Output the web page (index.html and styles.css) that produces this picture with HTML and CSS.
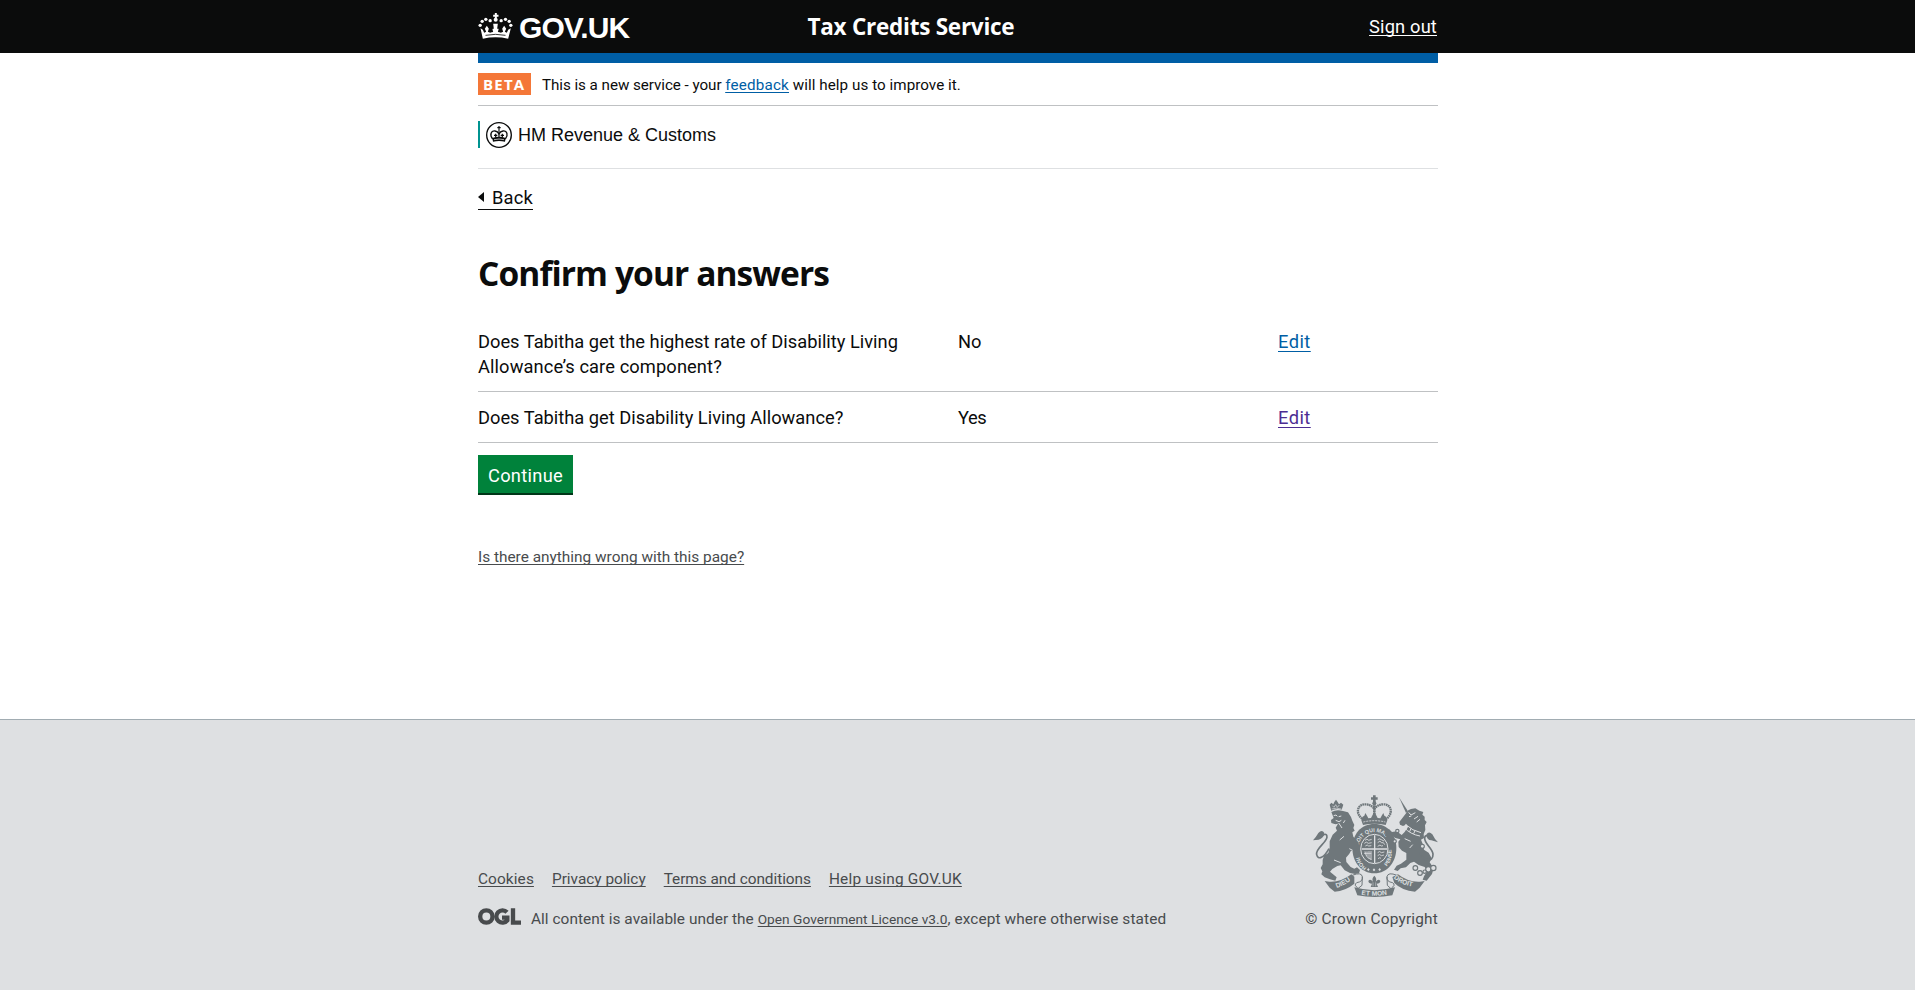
FILE: index.html
```
<!DOCTYPE html>
<html lang="en">
<head>
<meta charset="utf-8">
<title>Confirm your answers - Tax Credits Service - GOV.UK</title>
<link rel="stylesheet" href="styles.css">
</head>
<body>
<header class="header">
  <div class="wrap header-inner">
    <a class="logo" href="#">
      <svg class="logo-crown" viewBox="24 38 104 78" fill="#fff">
        <path d="M74 38h6v5h5v6h-5v5h-6v-5h-5v-6h5z"/>
        <circle cx="76.500" cy="58" r="6"/>
        <circle cx="60" cy="61" r="5"/><circle cx="93" cy="61" r="5"/>
        <circle cx="47" cy="57" r="5"/><circle cx="106" cy="57" r="5"/>
        <circle cx="36" cy="63" r="5"/><circle cx="117" cy="63" r="5"/>
        <circle cx="30" cy="75" r="5"/><circle cx="122" cy="75" r="5"/>
        <path d="M38 115 31 84l7 4 4 9 6-3-4-9 6-9 6 9-3 9 7 3 9-3-3-9h5l-2-15h14l-2 15h5l-3 9 9 3 7-3-3-9 6-9 6 9-4 9 6 3 4-9 8-4-8 31q-38-8-76 0z"/>
        <path d="M46 105q30-6 60 0" fill="none" stroke="#0b0c0c" stroke-width="2.500"/>
        <path d="M66 77v10M87 77v10M60 89l7 5M93 89l-7 5" stroke="#0b0c0c" stroke-width="3"/>
      </svg>
      <span class="logo-text">GOV.UK</span>
    </a>
    <span class="service">Tax Credits Service</span>
    <a class="signout" href="#">Sign out</a>
  </div>
</header>
<div class="wrap page">
  <div class="phase">
    <strong class="tag">BETA</strong>
    <span class="phase-text">This is a new service - your <a class="link feedback" href="#">feedback</a><span class="phase-end"> will help us to improve it.</span></span>
  </div>
  <div class="org">
    <div class="org-name">
      <svg class="org-crest" viewBox="0 0 78 78" fill="none" stroke="#0b0c0c">
        <circle cx="39" cy="39" r="37" stroke-width="4"/>
        <path d="M20 51C10 39 15 25 27 27c6 1 10 5 12 9 2-4 6-8 12-9 12-2 17 12 7 24" stroke-width="4"/>
        <path d="M39 12v13M34 17h10M39 25v26M29 35v11M24 40h10M49 35v11M44 40h10" stroke-width="3.500"/>
        <path d="M19 48q20-7 40 0l-2 11q-18-4-36 0z" fill="#0b0c0c" stroke="none"/>
        <path d="M24 53q15-4 30 0" stroke="#fff" stroke-width="2"/>
      </svg>
      <span class="org-text">HM Revenue &amp; Customs</span>
    </div>
  </div>
  <a class="back" href="#"><svg class="back-arrow" viewBox="0 0 6 10"><path d="M0 5 6 0v10z" fill="#0b0c0c"/></svg>Back</a>
  <main>
    <h1 class="title">Confirm your answers</h1>
    <div class="answers">
      <div class="answer">
        <span>Does Tabitha get the highest rate of Disability Living<br><span class="second-line">Allowance’s care component?</span></span>
        <span>No</span>
        <a class="link edit" href="#">Edit</a>
      </div>
      <div class="answer">
        <span>Does Tabitha get Disability Living Allowance?</span>
        <span class="yes">Yes</span>
        <a class="link edit visited" href="#">Edit</a>
      </div>
    </div>
    <button class="button">Continue</button>
  </main>
  <a class="help" href="#">Is there anything wrong with this page?</a>
</div>
<footer class="footer">
  <div class="wrap footer-inner">
    <div class="footer-meta">
      <nav class="footer-links">
        <a class="l-cookies" href="#">Cookies</a>
        <a class="l-privacy" href="#">Privacy policy</a>
        <a class="l-terms" href="#">Terms and conditions</a>
        <a class="l-help" href="#">Help using GOV.UK</a>
      </nav>
      <div class="licence">
        <svg class="ogl" viewBox="0 0 129 51" fill="none" stroke="#484b4d" stroke-width="13">
          <circle cx="25" cy="25.500" r="18.500"/>
          <path d="M87 13a18.500 18.500 0 1 0 1 24V29H72"/>
          <path d="M105 1v43h24"/>
        </svg>
        <span class="licence-text">All content is available under the <a class="licence-link" href="#">Open Government Licence v3.0</a><span class="licence-end">, except where otherwise stated</span></span>
      </div>
    </div>
    <div class="copyright">
      <svg class="arms" viewBox="15 15 375 306" fill="#6f777b">
        <defs>
          <path id="garter" d="M153 190a48 50 0 1 1 92 0"/>
          <path id="garter-left" d="M176 234a48 50 0 0 1-22-44"/>
          <path id="garter-right" d="M236 229a48 50 0 0 0 14-46"/>
          <path id="motto-left" d="M86 294Q112 285 134 266"/>
          <path id="motto-mid" d="M160 314q39 7 82 -1"/>
          <path id="motto-right" d="M257 264q24 22 62 26"/>
        </defs>
        <!-- royal crown -->
        <path d="M195 16h8v6h6v7h-6v7h-8v-7h-6v-7h6z"/>
        <circle cx="199" cy="40" r="6"/>
        <g fill="none" stroke="#6f777b">
          <path d="M168 90C139 73 148 42 171 43c14 0 22 6 28 13 6-7 14-13 28-13 23-1 32 30 3 47" stroke-width="7" stroke-dasharray="5 1.500"/>
          <path d="M199 43v39" stroke-width="8" stroke-dasharray="4 1"/>
        </g>
        <path d="M160 91l4-11 5-3 3-8 5 8 4 8 8-1 5-10 5-9 5 9 5 10 8 1 4-8 5-8 3 8 5 3 4 11-5 14q-34-8-68 0z"/>
        <path d="M166 96q33-8 66 0" fill="none" stroke="#dee0e2" stroke-width="2.500" stroke-dasharray="6 3"/>
        <!-- garter and shield -->
        <path d="M199 102c40 0 66 31 66 72s-26 76-66 76-66-35-66-76 26-72 66-72z"/>
        <ellipse cx="199" cy="177" rx="41" ry="44" fill="none" stroke="#dee0e2" stroke-width="3"/>
        <path d="M200 136v83M161 177h77" stroke="#dee0e2" stroke-width="4"/>
        <g fill="none" stroke="#dee0e2" stroke-width="2.500">
          <path d="M171 151q6-7 11 0l9-3M169 160q6-7 12 0l10-2M172 168q6-6 10 0l8-1M209 149q6-5 11 0l8 4M209 158l7-5q3 8 10 5l4 6M209 169l7-4q3 5 9 2"/>
          <path d="M171 184q2 20 19 24M177 184v15M183 183v22M189 183v27M168 190l22 0M209 188q6-7 11 0l9-2M209 197q6-7 11 0l8-2M210 206q6-5 9-1"/>
        </g>
        <g class="garter-text" fill="#dee0e2">
          <text><textPath href="#garter" startOffset="22">SOIT QUI MAL</textPath></text>
          <text><textPath href="#garter-right">PENSE</textPath></text>
          <text><textPath href="#garter-left">HONI</textPath></text>
        </g>
        <path d="M177 239l4-5 4 5-4 4zM194 240l4-5 4 5-4 4zM211 239l4-5 4 5-4 4z" fill="#dee0e2"/>
        <!-- lion -->
        <path d="M69 59l-4-15 5-6 6 5 3-7 5-7 5 7 4 7 6-5 7 6-5 15q-16-5-32 3z"/>
        <path d="M73 47l5 5 5-8 5 8 6-7M71 57q14-5 29 0" fill="none" stroke="#dee0e2" stroke-width="2"/>
        <path d="M70 66q16-9 35-3l15 4 9 14 4 11 6 13-3 9 4 8-7 5 3 13 8 9 8 10 2 14-11 10-14-1-5 9-10 12 1 13 13 15 11 5 8-4 9 8-3 10-12 2-15-3-16-8-12-15-10 2-15 9-7 8 11 9 9 8-4 10-16-4-16-6-10-9 3-9-5-10 6-11 0-13 4-13 13-8 4-16 0-19 9-20 13-12-4-9 7-12-8 2-12-4-1-9 8-6z"/>
        <path d="M77 77l7-2 4 4M92 80l8-2M83 91l10 4 7-4M92 99l10 15M111 91l-5 8M108 139l-13 11M124 176l10 5M78 210l20 8" fill="none" stroke="#dee0e2" stroke-width="3"/>
        <path d="M63 176C48 204 30 211 26 194c-5-19 33-38 31-54-1-10-9-9-15-1" fill="none" stroke="#6f777b" stroke-width="5"/>
        <path d="M15 151q8-8 16-22 11-12 18 0-3 17-17 20z"/>
        <!-- unicorn -->
        <path d="M273 22l27 42-6 5z"/>
        <path d="M293 71l8-10 8-4 13-2 12 7 12 4-3 8 7 6 0 10 6 6-5 10 1 14-5 12 1 12-9 5 5 12 4 18 14 9 9 17-6 12 12 18-5 17-16 20-12-3 4-10 10-17-8-11-18-6-14-10-11 4-13 13-16 3-9 8-11-4 8-12 13-6 16-12 0-20-13-7-10-11-1-16 6-7-15-4-11-9-8 9-12-7 1-12 11-7 9 8 14-2 15 11 9-9 8-13-1-10-12 5-9-4-2-8z"/>
        <path d="M302 67l7 8 13-7M303 80l7-2M318 87l12-8M326 96l10-8M290 146l18 8M314 164l-9 10" fill="none" stroke="#dee0e2" stroke-width="3"/>
        <g fill="none" stroke="#dee0e2" stroke-width="3"><path d="M292 103q22 20 47 25M289 113q18 20 47 25M299 108l-4 10M309 115l-4 10M321 122l-4 9"/></g>
        <path d="M335 188c10 26 41 30 40 5-1-19-26-31-25-49 1-10 9-8 16-2" fill="none" stroke="#6f777b" stroke-width="5"/>
        <path d="M390 157q-10-9-17-24-11-11-18 1 1 16 15 17z"/>
        <g fill="#dee0e2" stroke="#6f777b" stroke-width="3.500"><circle cx="322" cy="234" r="7"/><circle cx="336" cy="249" r="7"/><circle cx="361" cy="238" r="8"/><circle cx="376" cy="234" r="8"/><circle cx="350" cy="245" r="5"/><circle cx="343" cy="169" r="6"/><circle cx="268" cy="123" r="5"/><circle cx="260" cy="154" r="5"/></g>
        <!-- motto ribbon -->
        <path d="M50 273l14 2q35 2 66-22l9 7 0 21q-27 22-59 24l-15-12z"/>
        <path d="M350 273l-14 2q-36 2-66-22l-17 8 6 18q23 23 62 26l14-12z"/>
        <path d="M139 292q60 17 122 0l-8 24q-53 10-105 0z"/>
        <g fill="none" stroke="#6f777b" stroke-width="3"><path d="M133 256q27-11 30 4t-17 18q-10 8 3 15M163 260l-1 26-15 12M267 256q-27-11-30 4t17 18q10 8-3 15M237 260l1 26 13 12"/></g>
        <path d="M199 257q9 9 4 18 9-11 14-2-1 8-11 8l4 10h-22l4-10q-10 0-11-8 5-9 14 2-5-9 4-18z"/>
        <path d="M195 277v12M203 277v12" stroke="#dee0e2" stroke-width="1.500"/>
        <g class="motto-text" fill="#dee0e2">
          <text><textPath href="#motto-left">DIEU</textPath></text>
          <text><textPath href="#motto-mid">ET MON</textPath></text>
          <text><textPath href="#motto-right">DROIT</textPath></text>
        </g>
      </svg>
      <span class="copyright-text">© Crown Copyright</span>
    </div>
  </div>
</footer>
</body>
</html>
```
FILE: styles.css
```
* { box-sizing: border-box; }
body {
  margin: 0;
  padding-left: 1px;
  height: 990px;
  display: flex;
  flex-direction: column;
  overflow: hidden;
  background: linear-gradient(to right, #fff, #fff);
  color: #0b0c0c;
  font: 18.3px/25px Roboto, "Liberation Sans", sans-serif;
}
a {
  color: inherit;
  text-decoration: underline;
  text-decoration-thickness: 1px;
  text-underline-offset: 2px;
  text-decoration-skip-ink: none;
}
svg { display: block; flex: none; }
.wrap { width: 960px; margin: 0 auto; }

.header { height: 53px; margin-left: -1px; padding-left: 1px; background: #0b0c0c; color: #fff; }
.header-inner { display: grid; grid-template-columns: 329.500px 1fr auto; height: 53px; align-items: start; }
.logo { display: flex; text-decoration: none; padding-top: 13px; }
.logo-crown { width: 35px; height: 26px; }
.logo-text { margin-left: 6px; font: bold 30px/30px "Liberation Sans", Arial, sans-serif; letter-spacing: -0.9px; }
.service { padding-top: 12px; font: bold 22.5px/30px "Open Sans", sans-serif; letter-spacing: -0.25px; }
.signout { padding-top: 14px; padding-right: 1px; letter-spacing: 0.15px; }

.page { height: 666px; border-top: 10px solid #005ea5; }
.phase { display: flex; height: 43px; padding-top: 10px; border-bottom: 1px solid #bfc1c3; font-size: 15.2px; line-height: 22px; }
.tag { width: 53px; height: 22px; padding-left: 5px; background: #f47738; color: #fff; font: bold 15px/22px "Open Sans", sans-serif; letter-spacing: 1.2px; }
.phase-text { margin-left: 11px; padding-top: 1px; letter-spacing: -0.05px; white-space: nowrap; }
.link { color: #005ea5; }
.feedback { letter-spacing: 0.2px; }
.phase-end { letter-spacing: 0.05px; }
.org { height: 63px; padding-top: 15px; border-bottom: 1px solid #dee0e2; }
.org-name { display: flex; align-items: center; height: 27px; padding-left: 6px; border-left: 2px solid #009390; font: 18px/27px "Liberation Sans", Arial, sans-serif; gap: 6px; }
.org-crest { width: 26px; height: 26px; }
.org-text { padding-top: 2px; }
.back { display: flex; align-items: center; width: 55px; height: 25px; margin-top: 16px; border-bottom: 1px solid #0b0c0c; text-decoration: none; letter-spacing: 0.2px; }
.back-arrow { width: 6px; height: 10px; margin-right: 8px; }
.title { margin: 43px 0 0; font: bold 33.5px/41px "Open Sans", sans-serif; letter-spacing: -0.9px; }
.answers { margin-top: 22px; }
.answer { display: grid; grid-template-columns: 480px 320px 1fr; padding: 13px 0 12px; border-bottom: 1px solid #bfc1c3; }
.second-line { letter-spacing: 0.1px; }
.yes { letter-spacing: -0.4px; }
.edit { justify-self: start; letter-spacing: 0.45px; text-underline-offset: 3px; }
.visited { color: #4c2c92; }
.button { display: block; width: 95px; height: 38px; margin-top: 12px; padding: 3px 0 0; border: 0; background: #00823b; box-shadow: 0 2px 0 #003618; color: #fff; font: inherit; letter-spacing: 0.3px; }
.help { display: inline-block; margin-top: 52px; color: #484b4d; font-size: 15.4px; }

.footer { flex: 1; margin-left: -1px; padding-left: 1px; background: #dee0e2; border-top: 1px solid #a1acb2; color: #484b4d; font-size: 15.4px; line-height: 20px; }
.footer-inner { display: flex; justify-content: space-between; padding-top: 75px; }
.footer-meta { padding-top: 74px; }
.footer-links { display: flex; gap: 18px; }
.l-cookies { letter-spacing: 0.1px; }
.l-terms { letter-spacing: -0.05px; }
.l-help { letter-spacing: 0.22px; }
.licence { display: flex; margin-top: 20px; }
.ogl { width: 43px; height: 17px; margin-top: -1px; }
.licence-text { margin-left: 10px; letter-spacing: 0.04px; }
.licence-link { font-size: 13.7px; letter-spacing: 0.02px; }
.licence-end { letter-spacing: 0.1px; }
.copyright { display: flex; flex-direction: column; align-items: flex-end; }
.arms { width: 125px; height: 102px; }
.copyright-text { margin-top: 12px; letter-spacing: 0.2px; }
.garter-text { font: bold 16px "Liberation Sans", sans-serif; }
.motto-text { font: bold 20px "Liberation Sans", sans-serif; }
```
